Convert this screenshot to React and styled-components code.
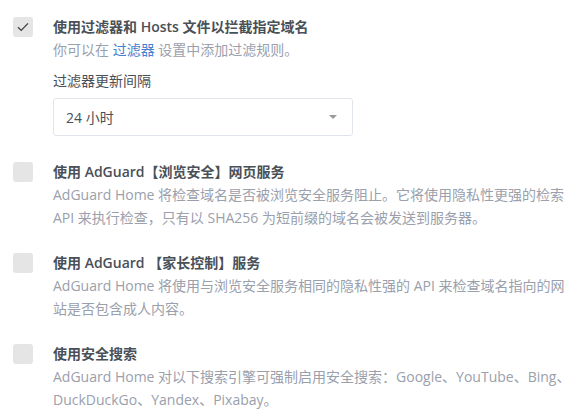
import React from "react";
import styled, { createGlobalStyle } from "styled-components";

const Global = createGlobalStyle`
  body {
    margin: 0;
    background: #fff;
    font-family: "Open Sans", "Noto Sans CJK SC", sans-serif;
    font-size: 14px;
    color: #495057;
  }
`;

const Page = styled.div`
  padding: 15px 0 0 13px;
  display: flex;
  flex-direction: column;
  gap: 22px;
`;

const Item = styled.div`
  display: flex;
  gap: 20px;
  align-items: flex-start;
`;

const Box = styled.div`
  flex: none;
  width: 20px;
  height: 20px;
  margin-top: 2px;
  border-radius: 3px;
  background: #e5e5e5;
  display: flex;
  align-items: center;
  justify-content: center;
`;

const Body = styled.div`
  flex: 1;
  min-width: 0;
`;

const Title = styled.div`
  font-weight: 600;
  line-height: 23px;
  color: #495057;
`;

const Desc = styled.div`
  line-height: 23px;
  color: #9aa0ac;
  white-space: nowrap;
`;

const Link = styled.a`
  color: #467fcf;
  text-decoration: none;
`;

const Label = styled.div`
  margin-top: 8px;
  line-height: 23px;
  color: #495057;
`;

const Select = styled.div`
  margin-top: 6px;
  margin-bottom: 2px;
  width: 300px;
  height: 38px;
  box-sizing: border-box;
  border: 1px solid #e0e5ec;
  border-radius: 3px;
  padding: 0 12px;
  display: flex;
  align-items: center;
  justify-content: space-between;
  color: #495057;
`;

const Caret = styled.span`
  width: 0;
  height: 0;
  border-left: 4px solid transparent;
  border-right: 4px solid transparent;
  border-top: 4px solid #999;
  margin-right: 3px;
`;

const Check = () => (
  <svg width="12" height="10" viewBox="0 0 12 10">
    <path d="M1 5.2 L4.2 8.4 L11 1.4" fill="none" stroke="#3d4246" strokeWidth="1.3" />
  </svg>
);

const Option = ({ checked, title, children }) => (
  <Item>
    <Box>{checked && <Check />}</Box>
    <Body>
      <Title>{title}</Title>
      {children}
    </Body>
  </Item>
);

export default function App() {
  return (
    <>
      <Global />
      <Page>
        <Option checked title="使用过滤器和 Hosts 文件以拦截指定域名">
          <Desc>
            你可以在 <Link>过滤器</Link> 设置中添加过滤规则。
          </Desc>
          <Label>过滤器更新间隔</Label>
          <Select>
            <span>24 小时</span>
            <Caret />
          </Select>
        </Option>
        <Option title="使用 AdGuard【浏览安全】网页服务">
          <Desc>
            AdGuard Home 将检查域名是否被浏览安全服务阻止。它将使用隐私性更强的检索
            <br />
            API 来执行检查，只有以 SHA256 为短前缀的域名会被发送到服务器。
          </Desc>
        </Option>
        <Option title="使用 AdGuard 【家长控制】服务">
          <Desc>
            AdGuard Home 将使用与浏览安全服务相同的隐私性强的 API 来检查域名指向的网
            <br />
            站是否包含成人内容。
          </Desc>
        </Option>
        <Option title="使用安全搜索">
          <Desc>
            AdGuard Home 对以下搜索引擎可强制启用安全搜索：Google、YouTube、Bing、
            <br />
            DuckDuckGo、Yandex、Pixabay。
          </Desc>
        </Option>
      </Page>
    </>
  );
}
